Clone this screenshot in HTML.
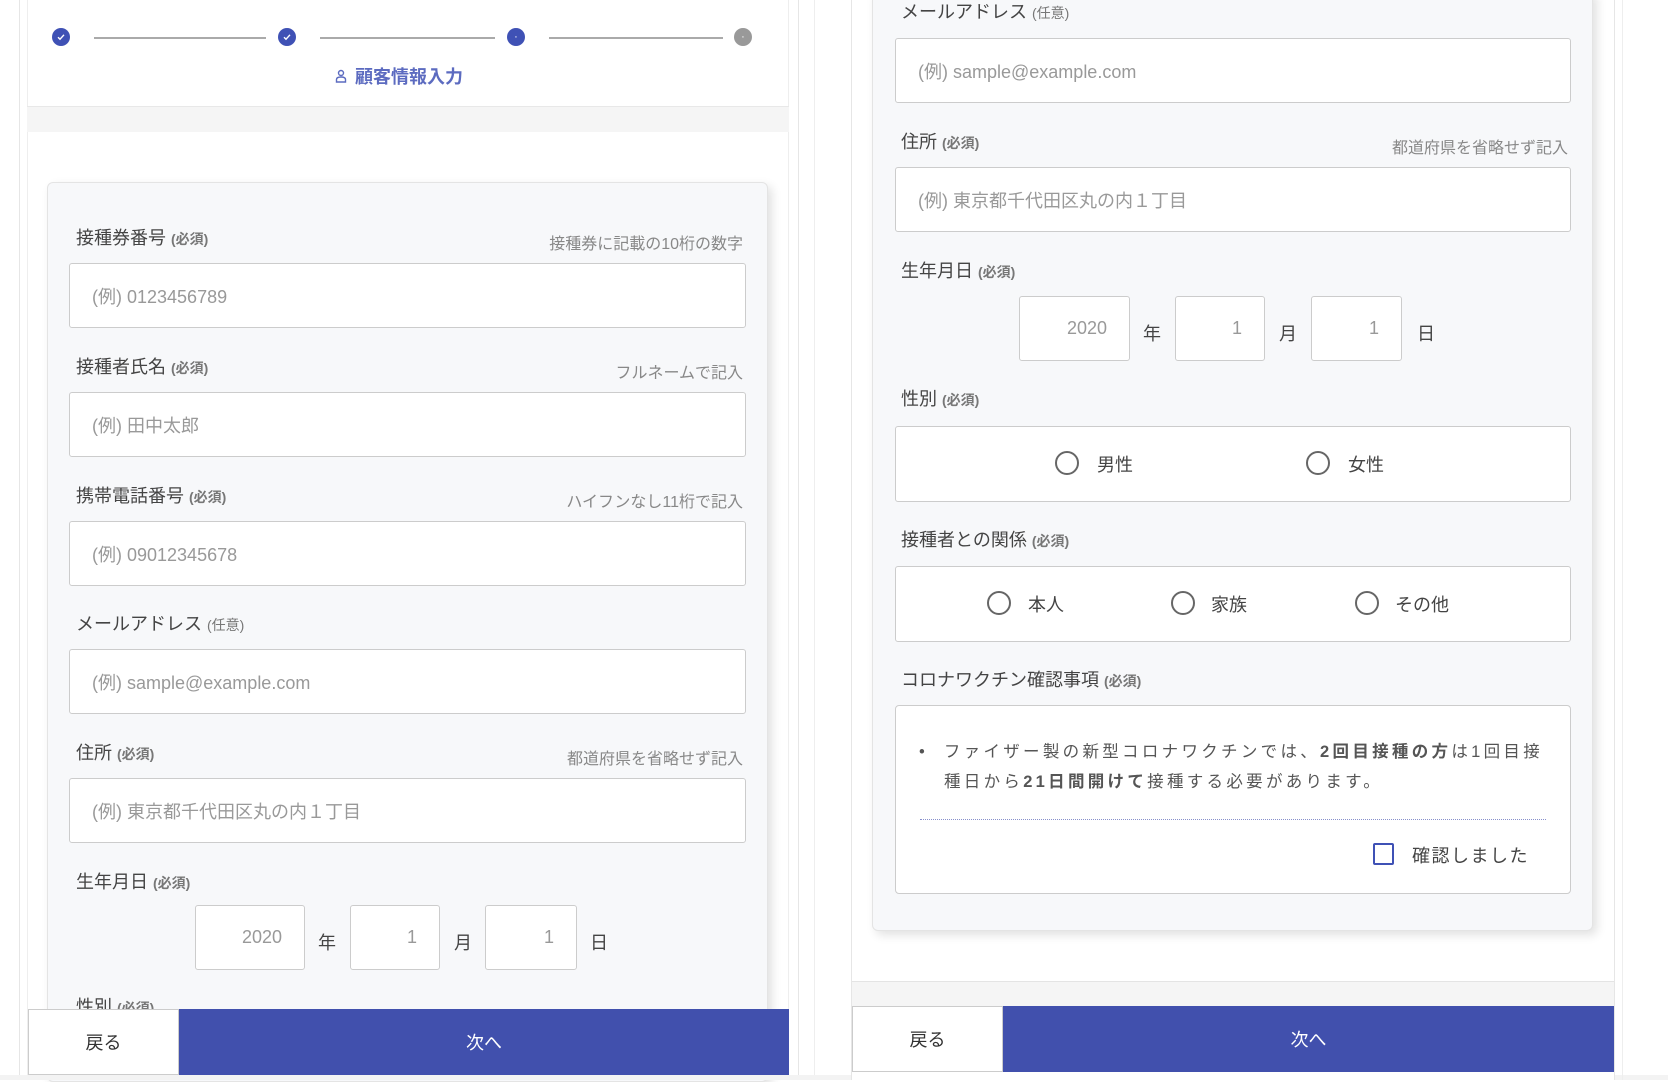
<!DOCTYPE html>
<html><head><meta charset="utf-8"><style>
*{box-sizing:border-box;margin:0;padding:0}
body{width:1668px;height:1080px;background:#fff;position:relative;overflow:hidden;font-family:"Liberation Sans","Noto Sans CJK JP",sans-serif;color:#444}
.a{position:absolute}
.lbl{position:absolute;font-size:18px;color:#444;white-space:nowrap}
.lbl small{font-size:14px;color:#777;font-weight:bold}
.hint{position:absolute;font-size:16px;color:#888;white-space:nowrap;text-align:right}
.inp{position:absolute;background:#fff;border:1px solid #ccc;border-radius:3px;font-size:18px;color:#999;padding-left:22px;display:flex;align-items:center}
.db{position:absolute;background:#fff;border:1px solid #ccc;border-radius:3px;font-size:18px;color:#999;text-align:right;padding-right:22px;display:flex;align-items:center;justify-content:flex-end}
.u{position:absolute;font-size:18px;color:#444}
.rad{position:absolute;width:24px;height:24px;border:2px solid #666;border-radius:50%}
.rt{position:absolute;font-size:18px;color:#444}
.btnb{position:absolute;background:#fff;border:1px solid #ccc;font-size:18px;color:#333;display:flex;align-items:center;justify-content:center}
.btnn{position:absolute;background:#4150ad;font-size:18px;color:#fff;display:flex;align-items:center;justify-content:center}
.dot{position:absolute;width:18px;height:18px;border-radius:50%;background:#3f51b5;color:#fff;font-size:11px;display:flex;align-items:center;justify-content:center}
.line{position:absolute;height:2px;background:#aaa}
</style></head><body>
<div class="a" style="left:19px;top:0;width:780px;height:1080px;border-left:1px solid #e6e6e6;border-right:1px solid #e6e6e6;background:#fff"></div>
<div class="a" style="left:814px;top:0;width:1px;height:1080px;background:#eee"></div>
<div class="a" style="left:27px;top:0;width:762px;height:106px;background:#fff;border-left:1px solid #eee;border-right:1px solid #eee"></div>
<div class="a" style="left:27px;top:106px;width:762px;height:26px;background:#f5f5f5;border-top:1px solid #e8e8e8"></div>
<div class="dot" style="left:52px;top:28px"><svg width="10" height="10" viewBox="0 0 10 10"><path d="M2 5.2l2 2 4-4.4" stroke="#fff" stroke-width="1.4" fill="none"/></svg></div>
<div class="line" style="left:94px;top:37px;width:172px"></div>
<div class="dot" style="left:278px;top:28px"><svg width="10" height="10" viewBox="0 0 10 10"><path d="M2 5.2l2 2 4-4.4" stroke="#fff" stroke-width="1.4" fill="none"/></svg></div>
<div class="line" style="left:320px;top:37px;width:175px"></div>
<div class="dot" style="left:507px;top:28px">·</div>
<div class="line" style="left:549px;top:37px;width:174px"></div>
<div class="dot" style="left:734px;top:28px;background:#999">·</div>
<svg class="a" style="left:335px;top:69px" width="12" height="14" viewBox="0 0 12 14"><circle cx="6" cy="4" r="2.5" stroke="#5c6bc0" stroke-width="1.4" fill="none"/><path d="M1.5 13v-2.5q0-2.5 4.5-2.5t4.5 2.5V13z" stroke="#5c6bc0" stroke-width="1.4" fill="none"/></svg>
<div class="a" style="left:355px;top:63px;font-size:18px;font-weight:bold;color:#5c6bc0">顧客情報入力</div>
<div class="a" style="left:27px;top:132px;width:762px;height:948px;background:#fff;border-left:1px solid #eee;border-right:1px solid #eee"></div>
<div class="a" style="left:47px;top:182px;width:721px;height:900px;background:#f7f8fa;border:1px solid #e4e4e4;border-radius:6px;box-shadow:4px 4px 10px rgba(0,0,0,.12)"></div>

<div class="lbl" style="left:76px;top:224px">接種券番号 <small>(必須)</small></div>
<div class="hint" style="right:925px;top:230px">接種券に記載の10桁の数字</div>
<div class="inp" style="left:69px;top:263px;width:677px;height:65px">(例) 0123456789</div>

<div class="lbl" style="left:76px;top:353px">接種者氏名 <small>(必須)</small></div>
<div class="hint" style="right:925px;top:359px">フルネームで記入</div>
<div class="inp" style="left:69px;top:392px;width:677px;height:65px">(例) 田中太郎</div>

<div class="lbl" style="left:76px;top:482px">携帯電話番号 <small>(必須)</small></div>
<div class="hint" style="right:925px;top:488px">ハイフンなし11桁で記入</div>
<div class="inp" style="left:69px;top:521px;width:677px;height:65px">(例) 09012345678</div>

<div class="lbl" style="left:76px;top:610px">メールアドレス <small style="font-weight:normal">(任意)</small></div>
<div class="inp" style="left:69px;top:649px;width:677px;height:65px">(例) sample@example.com</div>

<div class="lbl" style="left:76px;top:739px">住所 <small>(必須)</small></div>
<div class="hint" style="right:925px;top:745px">都道府県を省略せず記入</div>
<div class="inp" style="left:69px;top:778px;width:677px;height:65px">(例) 東京都千代田区丸の内１丁目</div>

<div class="lbl" style="left:76px;top:868px">生年月日 <small>(必須)</small></div>
<div class="db" style="left:195px;top:905px;width:110px;height:65px">2020</div>
<div class="u" style="left:318px;top:929px">年</div>
<div class="db" style="left:350px;top:905px;width:90px;height:65px">1</div>
<div class="u" style="left:454px;top:929px">月</div>
<div class="db" style="left:485px;top:905px;width:92px;height:65px">1</div>
<div class="u" style="left:590px;top:929px">日</div>
<div class="lbl" style="left:76px;top:993px">性別 <small>(必須)</small></div>

<div class="a" style="left:0;top:1075px;width:1668px;height:5px;background:#f3f3f3"></div>
<div class="btnb" style="left:28px;top:1009px;width:151px;height:66px">戻る</div>
<div class="btnn" style="left:179px;top:1009px;width:610px;height:66px">次へ</div>

<div class="a" style="left:851px;top:0;width:764px;height:1080px;background:#fff;border-left:1px solid #e6e6e6;border-right:1px solid #e6e6e6"></div>
<div class="a" style="left:1622px;top:0;width:1px;height:1080px;background:#eee"></div>
<div class="a" style="left:872px;top:-10px;width:721px;height:941px;background:#f7f8fa;border:1px solid #e4e4e4;border-radius:6px;box-shadow:4px 4px 10px rgba(0,0,0,.12)"></div>

<div class="lbl" style="left:901px;top:-2px">メールアドレス <small style="font-weight:normal">(任意)</small></div>
<div class="inp" style="left:895px;top:38px;width:676px;height:65px">(例) sample@example.com</div>

<div class="lbl" style="left:901px;top:128px">住所 <small>(必須)</small></div>
<div class="hint" style="right:100px;top:134px">都道府県を省略せず記入</div>
<div class="inp" style="left:895px;top:167px;width:676px;height:65px">(例) 東京都千代田区丸の内１丁目</div>

<div class="lbl" style="left:901px;top:257px">生年月日 <small>(必須)</small></div>
<div class="db" style="left:1019px;top:296px;width:111px;height:65px">2020</div>
<div class="u" style="left:1143px;top:320px">年</div>
<div class="db" style="left:1175px;top:296px;width:90px;height:65px">1</div>
<div class="u" style="left:1279px;top:320px">月</div>
<div class="db" style="left:1311px;top:296px;width:91px;height:65px">1</div>
<div class="u" style="left:1417px;top:320px">日</div>

<div class="lbl" style="left:901px;top:385px">性別 <small>(必須)</small></div>
<div class="a" style="left:895px;top:426px;width:676px;height:76px;background:#fff;border:1px solid #ccc;border-radius:3px"></div>
<div class="rad" style="left:1055px;top:451px"></div><div class="rt" style="left:1097px;top:451px">男性</div>
<div class="rad" style="left:1306px;top:451px"></div><div class="rt" style="left:1348px;top:451px">女性</div>

<div class="lbl" style="left:901px;top:526px">接種者との関係 <small>(必須)</small></div>
<div class="a" style="left:895px;top:566px;width:676px;height:76px;background:#fff;border:1px solid #ccc;border-radius:3px"></div>
<div class="rad" style="left:987px;top:591px"></div><div class="rt" style="left:1028px;top:591px">本人</div>
<div class="rad" style="left:1171px;top:591px"></div><div class="rt" style="left:1211px;top:591px">家族</div>
<div class="rad" style="left:1355px;top:591px"></div><div class="rt" style="left:1395px;top:591px">その他</div>

<div class="lbl" style="left:901px;top:666px">コロナワクチン確認事項 <small>(必須)</small></div>
<div class="a" style="left:895px;top:705px;width:676px;height:189px;background:#fff;border:1px solid #ccc;border-radius:4px"></div>
<div class="a" style="left:919px;top:737px;width:650px;font-size:16.5px;line-height:30px;color:#555;letter-spacing:3.3px;white-space:nowrap">•&nbsp;&nbsp;ファイザー製の新型コロナワクチンでは、<b>2回目接種の方</b>は1回目接<br><span style="padding-left:25px">種日から<b>21日間開けて</b>接種する必要があります。</span></div>
<div class="a" style="left:920px;top:819px;width:626px;border-top:1px dotted #8890cc"></div>
<div class="a" style="left:1373px;top:843px;width:21px;height:22px;border:2px solid #3f51b5;border-radius:2px"></div>
<div class="a" style="left:1412px;top:842px;font-size:18px;color:#444;letter-spacing:1.5px">確認しました</div>

<div class="a" style="left:852px;top:981px;width:762px;height:25px;background:#f5f5f5;border-top:1px solid #e4e4e4"></div>
<div class="btnb" style="left:852px;top:1006px;width:151px;height:66px">戻る</div>
<div class="btnn" style="left:1003px;top:1006px;width:611px;height:66px">次へ</div>
</body></html>
